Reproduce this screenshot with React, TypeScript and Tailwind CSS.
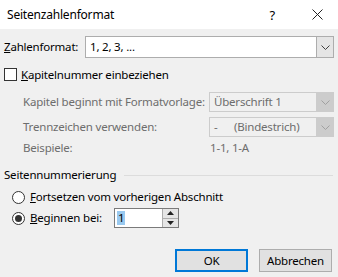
import React from "react";

const Chevron = ({ color }: { color: string }) => (
  <svg width="9" height="5" viewBox="0 0 9 5" fill="none">
    <path d="M0.5 0.5 L4.5 4.5 L8.5 0.5" stroke={color} strokeWidth="1" />
  </svg>
);

const Combo = ({
  value,
  disabled,
  className,
}: {
  value: React.ReactNode;
  disabled?: boolean;
  className: string;
}) => (
  <div
    className={`flex border ${
      disabled ? "border-[#cccccc] bg-[#f0f0f0] text-[#6d6d6d]" : "border-[#adadad] bg-white text-black"
    } ${className}`}
  >
    <div className="flex-1 flex items-center pl-[4px]">{value}</div>
    <div
      className={`w-[17px] flex items-center justify-center ${
        disabled ? "bg-[#cccccc] border-l border-[#cccccc]" : "bg-[#e5e5e5] border-l border-[#adadad]"
      }`}
    >
      <Chevron color={disabled ? "#a0a0a0" : "#404040"} />
    </div>
  </div>
);

const Radio = ({ checked }: { checked?: boolean }) => (
  <div className="w-[13px] h-[13px] rounded-full border border-[#333333] bg-white flex items-center justify-center">
    {checked && <div className="w-[7px] h-[7px] rounded-full bg-[#333333]" />}
  </div>
);

const App = () => (
  <div
    className="w-[338px] h-[277px] bg-[#f0f0f0] text-[11.5px] tracking-[-0.2px] leading-[16px] text-black overflow-hidden whitespace-nowrap"
    style={{ fontFamily: '"Noto Sans", "Open Sans", sans-serif' }}
  >
    <div className="h-[29px] bg-white flex items-center">
      <span className="pl-[7px] text-[12px]">Seitenzahlenformat</span>
      <span className="ml-auto mr-[37px] text-[13px]">?</span>
      <svg width="11" height="11" viewBox="0 0 11 11" className="mr-[15px]">
        <path d="M0.5 0.5 L10.5 10.5 M10.5 0.5 L0.5 10.5" stroke="#222" strokeWidth="1" />
      </svg>
    </div>

    <div className="flex items-center h-[22px] mt-[7px] pl-[4px]">
      <span className="w-[81px]">
        <span className="underline">Z</span>ahlenformat:
      </span>
      <Combo value="1, 2, 3, ..." className="w-[249px] h-[22px]" />
    </div>

    <div className="flex items-center h-[13px] mt-[10px] pl-[4px] gap-[4px]">
      <div className="w-[13px] h-[13px] border border-[#333333] bg-white" />
      <span>
        <span className="underline">K</span>apitelnummer einbeziehen
      </span>
    </div>

    <div className="flex items-center h-[20px] mt-[11px] pl-[23px] text-[#6d6d6d]">
      <span className="w-[186px]">Kapitel beginnt mit Formatvorlage:</span>
      <Combo value="Überschrift 1" disabled className="w-[125px] h-[20px]" />
    </div>

    <div className="flex items-center h-[20px] mt-[5px] pl-[23px] text-[#6d6d6d]">
      <span className="w-[186px]">Trennzeichen verwenden:</span>
      <Combo
        value={
          <span className="flex">
            <span className="w-[20px]">-</span>
            <span>(Bindestrich)</span>
          </span>
        }
        disabled
        className="w-[125px] h-[20px]"
      />
    </div>

    <div className="flex items-center h-[16px] mt-[3px] pl-[23px] text-[#6d6d6d]">
      <span className="w-[187px]">Beispiele:</span>
      <span>1-1, 1-A</span>
    </div>

    <div className="flex items-center h-[16px] mt-[11px] pl-[4px] pr-[5px]">
      <span>Seitennummerierung</span>
      <div className="flex-1 h-px bg-[#dcdcdc] ml-[8px]" />
    </div>

    <div className="flex items-center h-[16px] mt-[6px] pl-[12px] gap-[5px]">
      <Radio />
      <span>
        <span className="underline">F</span>ortsetzen vom vorherigen Abschnitt
      </span>
    </div>

    <div className="flex items-center h-[20px] mt-[3px] pl-[12px]">
      <Radio checked />
      <span className="ml-[5px] w-[84px]">
        <span className="underline">B</span>eginnen bei:
      </span>
      <div className="w-[65px] h-[20px] border border-[#7a7a7a] bg-white flex">
        <div className="flex-1 flex items-center pl-[2px]">
          <span className="bg-[#99c9ef] px-[1px] leading-[14px]">1</span>
        </div>
        <div className="w-[16px] flex flex-col border-l border-[#adadad]">
          <div className="flex-1 flex items-center justify-center bg-[#e5e5e5] border-b border-[#adadad]">
            <svg width="7" height="4" viewBox="0 0 7 4">
              <path d="M0 4 L3.5 0 L7 4 Z" fill="#222" />
            </svg>
          </div>
          <div className="flex-1 flex items-center justify-center bg-[#e5e5e5]">
            <svg width="7" height="4" viewBox="0 0 7 4">
              <path d="M0 0 L3.5 4 L7 0 Z" fill="#222" />
            </svg>
          </div>
        </div>
      </div>
    </div>

    <div className="flex justify-end gap-[11px] mt-[21px] pr-[6px]">
      <button className="w-[73px] h-[23px] border-2 border-[#0078d7] bg-[#e1e1e1] text-[11.5px]">
        OK
      </button>
      <button className="w-[73px] h-[23px] border border-[#adadad] bg-[#e1e1e1] text-[11.5px]">
        Abbrechen
      </button>
    </div>
  </div>
);

export default App;
